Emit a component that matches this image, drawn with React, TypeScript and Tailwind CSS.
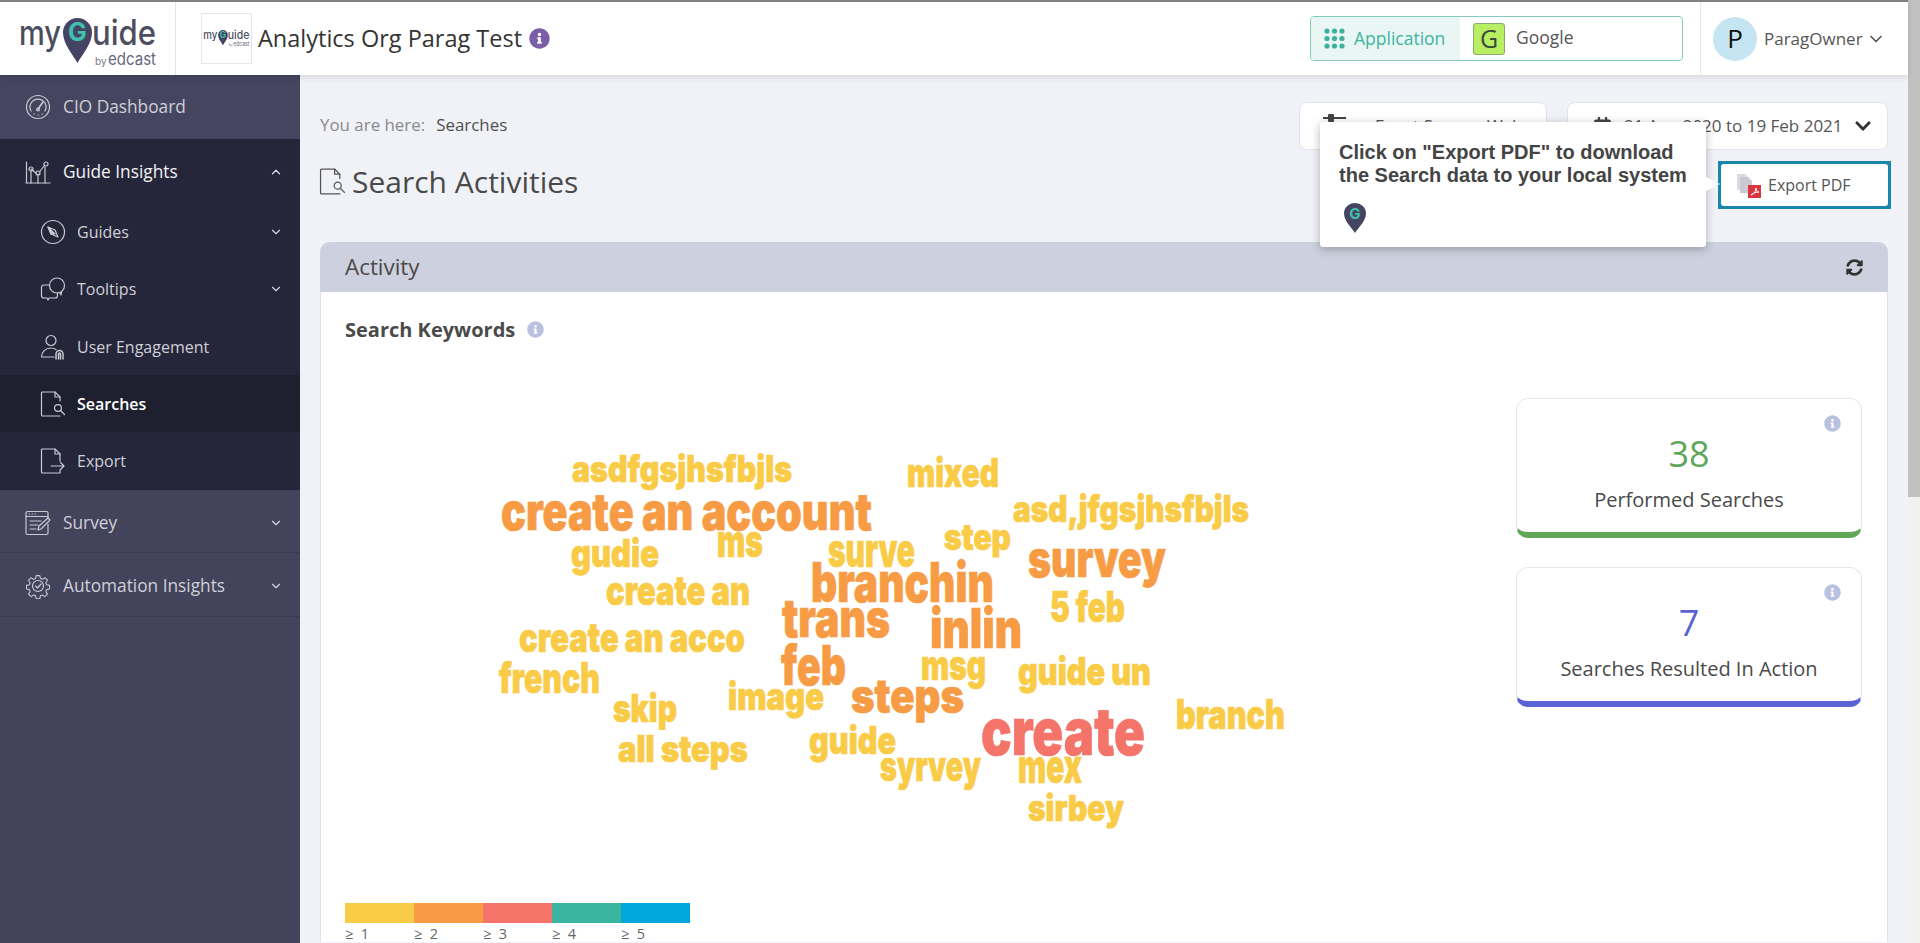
import React from "react";
import { ChevronDown, ChevronUp } from "lucide-react";
import { FaCalendarAlt, FaChevronDown, FaInfoCircle, FaSyncAlt } from "react-icons/fa";

const Y = "#f9cb47";
const O = "#f79c45";
const R = "#f4746a";

// word cloud: [text, x, width, baseline, size, colour], in page coordinates
const words: [string, number, number, number, number, string][] = [
  ["asdfgsjhsfbjls", 572, 220, 482, 37, Y],
  ["mixed", 907, 92, 487, 40, Y],
  ["create an account", 501, 371, 530, 52, O],
  ["asd,jfgsjhsfbjls", 1013, 236, 522, 37, Y],
  ["ms", 717, 46, 557, 46, Y],
  ["step", 944, 67, 550, 36, Y],
  ["gudie", 571, 88, 567, 39, Y],
  ["surve", 828, 87, 567, 47, Y],
  ["survey", 1028, 138, 577, 51, O],
  ["branchin", 811, 183, 602, 55, O],
  ["create an", 606, 144, 605, 41, Y],
  ["5 feb", 1050, 75, 622, 42, Y],
  ["trans", 782, 108, 637, 53, O],
  ["inlin", 930, 92, 648, 55, O],
  ["create an acco", 519, 226, 652, 41, Y],
  ["feb", 781, 65, 685, 55, O],
  ["msg", 921, 65, 680, 42, Y],
  ["guide un", 1018, 133, 685, 39, Y],
  ["french", 499, 101, 693, 42, Y],
  ["image", 728, 96, 710, 39, Y],
  ["steps", 851, 113, 713, 47, O],
  ["skip", 613, 64, 722, 39, Y],
  ["branch", 1176, 109, 729, 41, Y],
  ["create", 981, 164, 755, 66, R],
  ["all steps", 618, 130, 762, 37, Y],
  ["guide", 809, 87, 754, 39, Y],
  ["syrvey", 880, 101, 781, 42, Y],
  ["mex", 1018, 64, 783, 47, Y],
  ["sirbey", 1028, 96, 821, 36, Y],
];

const legend = [
  { c: "bg-[#f9cb47]", t: "≥  1" },
  { c: "bg-[#f79c45]", t: "≥  2" },
  { c: "bg-[#f4746a]", t: "≥  3" },
  { c: "bg-[#3ab5a0]", t: "≥  4" },
  { c: "bg-[#00a6dc]", t: "≥  5" },
];

function Logo({ className }: { className?: string }) {
  return (
    <svg viewBox="0 0 140 50" className={`overflow-visible ${className}`}>
      <text x="1" y="27" fontSize="35" fontWeight="500" fill="#4d4d60" textLength="42" lengthAdjust="spacingAndGlyphs" fontFamily="Inter">my</text>
      <path d="M59.5 45C55 37 45 26 45 14.5a14.5 14.5 0 1 1 29 0C74 26 64 37 59.5 45Z" fill="#454563" />
      <text x="59.5" y="23" fontSize="25" fontWeight="700" fill="#3fc0ac" textAnchor="middle" fontFamily="Inter">G</text>
      <text x="74" y="27" fontSize="35" fontWeight="500" fill="#4d4d60" textLength="64" lengthAdjust="spacingAndGlyphs" fontFamily="Inter">uide</text>
      <text x="77" y="47" fontSize="10" fill="#77778a" fontFamily="Inter">by</text>
      <text x="90" y="47" fontSize="17" fill="#66667a" textLength="48" lengthAdjust="spacingAndGlyphs" fontFamily="Inter">edcast</text>
    </svg>
  );
}

function IconBase({ children, className }: { children: React.ReactNode; className?: string }) {
  return (
    <svg viewBox="0 0 26 26" fill="none" stroke="currentColor" strokeWidth="1.2" strokeLinecap="round" strokeLinejoin="round" className={className ?? "w-[26px] h-[26px]"}>
      {children}
    </svg>
  );
}

const GaugeIcon = () => (
  <IconBase>
    <circle cx="13" cy="13" r="11.5" />
    <path d="M6 17a8 8 0 1 1 14 0" />
    <path d="M13 15l5-7" strokeWidth="1.6" />
    <circle cx="13" cy="15.5" r="1.4" />
    <path d="M9 20h.5M13 21h.5M17 20h.5" />
  </IconBase>
);
const InsightsIcon = () => (
  <IconBase>
    <path d="M1.5 3v21M1 24h24" />
    <path d="M6 24V12M13 24V15M20 24V8" />
    <path d="M6 10l5 4M14.5 13l4.5-6" />
    <circle cx="6" cy="10" r="2" />
    <circle cx="13" cy="14" r="2" />
    <circle cx="21" cy="5" r="2" />
  </IconBase>
);
const CompassIcon = () => (
  <IconBase>
    <circle cx="13" cy="13" r="11.5" />
    <path d="M8 8l7 3 3 7-7-3z" />
    <path d="M8 8l7 7-4 0z" fill="currentColor" />
  </IconBase>
);
const TooltipsIcon = () => (
  <IconBase>
    <path d="M9 9H4a2.5 2.5 0 0 0-2.5 2.5v8A2.5 2.5 0 0 0 4 22h3l1 2 1-2h6a2.5 2.5 0 0 0 2.5-2.5V17" />
    <circle cx="17" cy="9.5" r="7.5" />
    <path d="M20 17l1 2 .5-3" />
  </IconBase>
);
const EngageIcon = () => (
  <IconBase>
    <circle cx="11" cy="6.5" r="5" />
    <path d="M1.5 23c0-5 4-9 9.5-9 2 0 3.5.4 5 1.5M1.5 23H14" />
    <path d="M16 25v-5a3.5 3.5 0 0 1 7 0v5M18.5 25v-5a1 1 0 0 1 2 0v5" strokeWidth="1.5" />
  </IconBase>
);
const DocSearchIcon = ({ className }: { className?: string }) => (
  <IconBase className={className}>
    <path d="M20 10V6l-5-5H2.5a1 1 0 0 0-1 1v22a1 1 0 0 0 1 1H20" />
    <path d="M15 1v5h5" />
    <circle cx="18" cy="17" r="3.4" />
    <path d="M20.5 19.5l4 4" />
  </IconBase>
);
const DocExportIcon = () => (
  <IconBase>
    <path d="M20 13V6l-5-5H2.5a1 1 0 0 0-1 1v22a1 1 0 0 0 1 1H20v-3" />
    <path d="M15 1v5h5" />
    <path d="M11 18h13M20.5 14.5L24 18l-3.5 3.5" />
  </IconBase>
);
const SurveyIcon = () => (
  <IconBase>
    <path d="M23 8V3a1.5 1.5 0 0 0-1.5-1.5h-19A1.5 1.5 0 0 0 1 3v20a1.5 1.5 0 0 0 1.5 1.5h19A1.5 1.5 0 0 0 23 23V14" />
    <path d="M1 6.5h22M4 4h.5M7 4h.5M10 4h.5" />
    <path d="M5 11h11M5 15h8M5 19h6" />
    <path d="M13 20l1-4 9-8 2 2-9 9z" />
  </IconBase>
);
const GearIcon = () => (
  <IconBase>
    <path d="M11 1.5h4l.7 3.2 2.2.9 2.8-1.8 2.8 2.8-1.8 2.8.9 2.2 3.2.7v4l-3.2.7-.9 2.2 1.8 2.8-2.8 2.8-2.8-1.8-2.2.9-.7 3.2h-4l-.7-3.2-2.2-.9-2.8 1.8-2.8-2.8 1.8-2.8-.9-2.2-3.2-.7v-4l3.2-.7.9-2.2-1.8-2.8 2.8-2.8 2.8 1.8 2.2-.9z" transform="translate(1.3 1.3) scale(.9)" />
    <circle cx="13" cy="13" r="5.5" />
    <path d="M10.5 13l2 2 3.5-4" />
  </IconBase>
);

function SideRow({ icon, label, open, chevron, sub, active, top, className }: {
  icon: React.ReactNode;
  label: string;
  open?: boolean;
  chevron?: boolean;
  sub?: boolean;
  active?: boolean;
  top?: boolean;
  className: string;
}) {
  return (
    <div className={`flex items-center ${sub ? "pl-[40px]" : "pl-[25px]"} pr-[17px] ${className}`}>
      <span className="w-[26px] flex justify-center text-[#c9c9d3]">{icon}</span>
      <span className={`${sub ? "ml-[11px] text-[16px]" : "ml-[12px] text-[17.3px]"} ${active ? "text-white font-semibold" : top ? "text-[#f2f2f5]" : "text-[#cfcfd8]"}`}>{label}</span>
      {chevron && (
        <span className="ml-auto text-[#d5d5dd]">
          {open ? <ChevronUp size={14} strokeWidth={2.4} /> : <ChevronDown size={14} strokeWidth={2} />}
        </span>
      )}
    </div>
  );
}

function KpiCard({ value, label, numCls, barCls }: { value: string; label: string; numCls: string; barCls: string }) {
  return (
    <div className={`relative w-[346px] h-[140px] bg-white rounded-[12px] border border-[#e6e7ec] border-b-[6px] ${barCls} flex flex-col items-center`}>
      <FaInfoCircle className="absolute right-[20px] top-[16px] text-[#b9c1e0] text-[17px]" />
      <div className={`mt-[30px] text-[36px] leading-[50px] ${numCls}`}>{value}</div>
      <div className="mt-[7px] text-[20px] leading-[28px] text-[#4a4a4a]">{label}</div>
    </div>
  );
}

export default function App() {
  return (
    <div className="flex w-[1920px] h-[943px] overflow-hidden bg-[#f0f2f8] font-['Open_Sans',sans-serif]">
      <div className="flex flex-col flex-1 min-w-0">
        <header className="relative z-10 flex items-center h-[75px] bg-white border-t-2 border-[#808080] shadow-[0_2px_6px_rgba(0,0,0,0.12)]">
          <div className="flex items-center h-full w-[176px] pl-[18px] pt-[9px] border-r border-[#e4e4e8]">
            <Logo className="w-[140px] h-[50px]" />
          </div>
          <div className="flex items-center justify-center ml-[25px] w-[51px] h-[51px] border border-[#e6e6e6]">
            <Logo className="w-[47px] h-[17px]" />
          </div>
          <span className="ml-[6px] text-[23.5px] text-[#333]">Analytics Org Parag Test</span>
          <FaInfoCircle className="ml-[7px] text-[21px] text-[#7a5ea8]" />

          <div className="flex ml-auto w-[373px] h-[45px] rounded-[4px] border border-[#85cabf] overflow-hidden">
            <div className="flex items-center w-[149px] pl-[13px] bg-[#e9f6f4]">
              <svg viewBox="0 0 21 21" className="w-[21px] h-[21px] fill-[#3fb09d]">
                {[3, 10.5, 18].map((cy) => [3, 10.5, 18].map((cx) => <circle key={`${cx}-${cy}`} cx={cx} cy={cy} r="2.6" />))}
              </svg>
              <span className="ml-[9px] text-[17.5px] text-[#3fb4a0]">Application</span>
            </div>
            <div className="flex items-center pl-[13px]">
              <span className="flex items-center justify-center w-[32px] h-[32px] rounded-[3px] bg-[#b8ee62] border border-[#8aa86a] text-[25px] text-[#3b4a3b]">G</span>
              <span className="ml-[11px] -mt-[2px] text-[17.5px] text-[#555]">Google</span>
            </div>
          </div>

          <div className="flex items-center h-full w-[208px] ml-[17px] pl-[12px] border-l border-[#e8e8ec]">
            <span className="flex items-center justify-center w-[44px] h-[44px] rounded-full bg-[#c5e5f2] text-[26px] text-[#111]">P</span>
            <span className="ml-[7px] text-[17px] text-[#555]">ParagOwner</span>
            <ChevronDown size={20} className="ml-[3px] text-[#555]" />
          </div>
        </header>

        <div className="flex flex-1 min-h-0">
          <aside className="flex flex-col w-[300px] shrink-0 bg-[#43435c]">
            <SideRow icon={<GaugeIcon />} label="CIO Dashboard" className="h-[64px] bg-[#45455f]" />
            <div className="bg-[#25263a]">
              <SideRow icon={<InsightsIcon />} label="Guide Insights" chevron open top className="h-[64px] pt-[1px]" />
              <SideRow sub icon={<CompassIcon />} label="Guides" chevron className="h-[57px]" />
              <SideRow sub icon={<TooltipsIcon />} label="Tooltips" chevron className="h-[58px]" />
              <SideRow sub icon={<EngageIcon />} label="User Engagement" className="h-[57px]" />
              <SideRow sub active icon={<DocSearchIcon />} label="Searches" className="h-[57px] bg-[#1e1f2f]" />
              <SideRow sub icon={<DocExportIcon />} label="Export" className="h-[58px]" />
            </div>
            <SideRow icon={<SurveyIcon />} label="Survey" chevron className="h-[63px] pt-[3px] border-b border-[#3a3a52]" />
            <SideRow icon={<GearIcon />} label="Automation Insights" chevron className="h-[64px] pt-[3px] border-b border-[#3a3a52]" />
          </aside>

          <main className="relative flex-1 min-w-0 pl-[20px] pr-[20px] pt-[27px]">
            <div className="flex items-center justify-between h-[48px]">
              <div className="pb-[2px] text-[16.9px] text-[#8a8a8a]">
                You are here:<span className="ml-[11px] text-[#4f4f4f]">Searches</span>
              </div>
              <div className="flex gap-[20px]">
                <div className="flex items-center w-[248px] h-[48px] pl-[23px] bg-white rounded-[8px] border border-[#e2e4ec] text-[17px] text-[#555]">
                  <svg viewBox="0 0 23 22" className="w-[23px] h-[22px] -mt-[4px] fill-[#444]">
                    <rect x="0" y="4" width="23" height="2" />
                    <rect x="5" y="1" width="6" height="8" rx="1" />
                    <rect x="0" y="12" width="23" height="2" />
                    <rect x="14" y="9" width="6" height="8" rx="1" />
                  </svg>
                  <span className="ml-[29px] whitespace-nowrap">Event Source: Web</span>
                </div>
                <div className="flex items-center w-[321px] h-[48px] pl-[25px] bg-white rounded-[8px] border border-[#e2e4ec] text-[17px] text-[#555]">
                  <FaCalendarAlt className="text-[19px] text-[#444]" />
                  <span className="ml-[12px] whitespace-nowrap">21 Aug 2020 to 19 Feb 2021</span>
                  <FaChevronDown className="ml-[11px] text-[18px] text-[#333]" />
                </div>
              </div>
            </div>

            <div className="flex items-center justify-between h-[48px] mt-[11px]">
              <div className="flex items-center pb-[7px] text-[#444]">
                <DocSearchIcon className="w-[27px] h-[27px] -ml-[1px] text-[#555]" />
                <h1 className="ml-[6px] text-[30px] text-[#4a4a4a]">Search Activities</h1>
              </div>
              <div className="-mr-[3px] p-[3px] bg-[#1a86ac]">
                <div className="flex items-center w-[167px] h-[42px] pl-[15px] bg-white rounded-[3px]">
                  <svg viewBox="0 0 25 25" className="w-[25px] h-[25px]">
                    <path d="M1 1h8l4 4v12H1z" fill="#dcdce0" />
                    <path d="M4 4h8l4 4v12H4z" fill="#c9cad0" />
                    <rect x="12" y="12" width="13" height="13" fill="#d9363e" />
                    <path d="M15 22c3-1 5-4 5-7 0 3 1 4 3 4-3 0-6 1-8 3z" fill="none" stroke="#fff" strokeWidth="1" />
                  </svg>
                  <span className="ml-[7px] text-[16px] text-[#555]">Export PDF</span>
                </div>
              </div>
            </div>

            <section className="mt-[33px] h-[700px] bg-white rounded-t-[10px] border-x border-[#dfe1ea]">
              <div className="flex items-center justify-between h-[50px] pl-[25px] pr-[25px] -mx-px bg-[#cdd0de] rounded-t-[10px]">
                <span className="text-[22.4px] text-[#4a4a4a]">Activity</span>
                <FaSyncAlt className="text-[17px] text-[#333]" />
              </div>
              <div className="flex items-center pl-[24px] pt-[25px] h-[50px]">
                <span className="text-[20px] font-bold text-[#4a4a4a]">Search Keywords</span>
                <FaInfoCircle className="ml-[12px] text-[17px] text-[#b9c1e0]" />
              </div>
              <div className="flex justify-between pl-[24px] pr-[25px] mt-[56px]">
                <div>
                  <svg viewBox="345 398 960 490" className="w-[960px] h-[490px]">
                    {words.map(([t, x, w, y, s, c]) => (
                      <text key={t} x={x} y={y} fontSize={s} fontWeight="900" fontFamily="Inter, 'Liberation Sans', sans-serif" fill={c} stroke={c} strokeWidth="0.7" textLength={w} lengthAdjust="spacingAndGlyphs">
                        {t}
                      </text>
                    ))}
                  </svg>
                  <div className="flex mt-[15px]">
                    {legend.map((l) => (
                      <div key={l.t} className="w-[69px]">
                        <div className={`h-[20px] ${l.c}`} />
                        <div className="mt-[2px] text-[14.5px] leading-[18px] text-[#666] whitespace-pre">{l.t}</div>
                      </div>
                    ))}
                  </div>
                </div>
                <div className="flex flex-col gap-[29px]">
                  <KpiCard value="38" label="Performed Searches" numCls="text-[#5ea65a]" barCls="border-b-[#62a658]" />
                  <KpiCard value="7" label="Searches Resulted In Action" numCls="text-[#5a63d0]" barCls="border-b-[#5a63d6]" />
                </div>
              </div>
            </section>

            <div className="absolute left-[1020px] top-[47px] w-[386px] h-[125px] pl-[19px] pt-[19px] bg-white rounded-[3px] shadow-[0_2px_10px_rgba(0,0,0,0.28)]">
              <p className="text-[20px] leading-[23px] font-bold text-[#444] font-['Liberation_Sans',sans-serif] whitespace-nowrap">
                Click on "Export PDF" to download
                <br />
                the Search data to your local system
              </p>
              <svg viewBox="0 0 22 30" className="mt-[16px] ml-[5px] w-[22px] h-[30px]">
                <path d="M11 30C8 25 0 18 0 10.5a11 10.5 0 1 1 22 0C22 18 14 25 11 30Z" fill="#454563" />
                <text x="11" y="16" fontSize="15" fontWeight="700" fill="#3fc0ac" textAnchor="middle" fontFamily="Inter">G</text>
              </svg>
              <span className="absolute left-full top-[55px] border-y-[7px] border-l-[14px] border-y-transparent border-l-white" />
            </div>
          </main>
        </div>
      </div>
      <div className="w-[12px] shrink-0 bg-[#f1f1f1]">
        <div className="h-[497px] bg-[#c1c1c1]" />
      </div>
    </div>
  );
}
